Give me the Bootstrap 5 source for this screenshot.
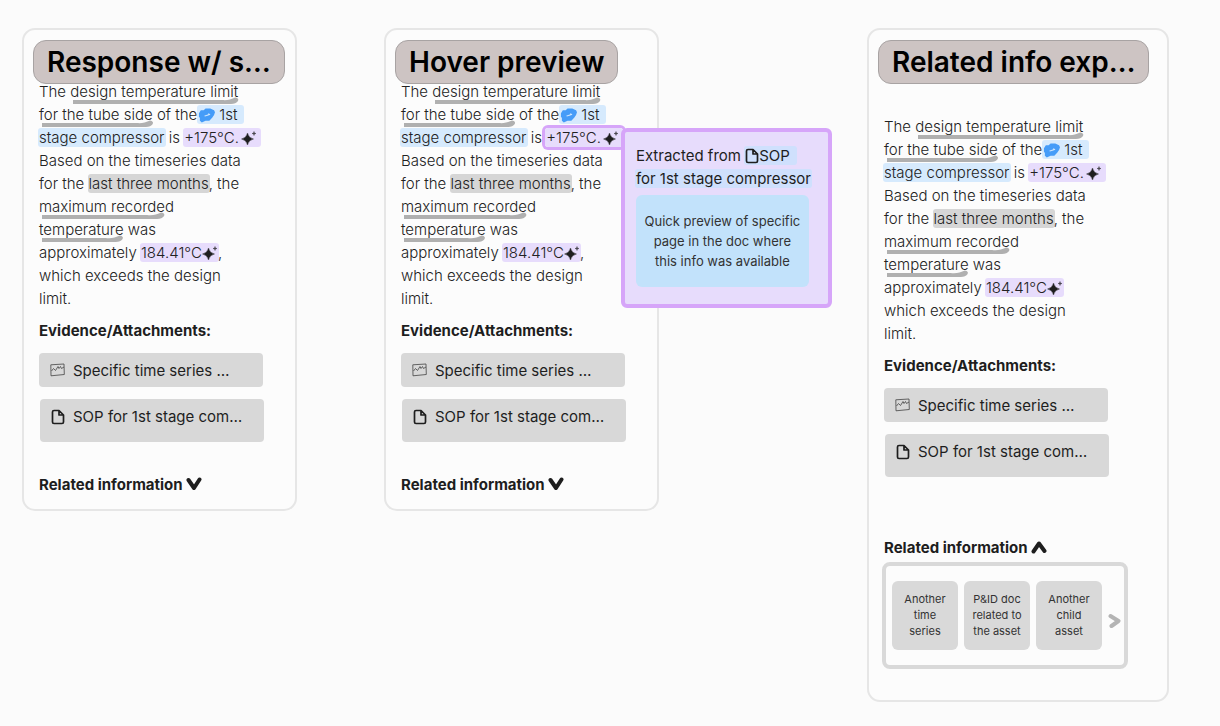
<!DOCTYPE html>
<html lang="en">
<head>
<meta charset="utf-8">
<meta name="viewport" content="width=device-width, initial-scale=1">
<title>Copilot response concepts</title>
<link href="https://cdn.jsdelivr.net/npm/bootstrap@5.3.0/dist/css/bootstrap.min.css" rel="stylesheet">
<style>
  body { background: #fbfbfb; color: #1e1e1e; font-family: Inter, "Liberation Sans", sans-serif; font-size: 15px; line-height: 23px; }
  .board { display: grid; grid-template-columns: minmax(0, 275fr) minmax(0, 87fr) minmax(0, 275fr) minmax(0, 208fr) minmax(0, 302fr); align-items: start; padding: 28px 51px 25px 22px; }
  .board > :nth-child(2) { grid-column: 3; }
  .board > :nth-child(3) { grid-column: 5; }
  .panel { border: 2px solid #e6e6e6; border-radius: 13px; background: #fcfcfc; padding: 10px 15px 13px; }
  .panel-title { display: table; margin: 0 0 0 -6px; padding: 0 13px; border: 1px solid #a8a3a3; border-radius: 13px; background: #cdc4c3; color: #000; font-size: 28px; line-height: 42px; font-weight: 600; white-space: nowrap; }
  .answer { margin: -4px 0 9px; color: #222; font-weight: 300; white-space: nowrap; }
  .panel-open .answer { margin-top: 31px; }
  .section-title { margin: 0; font-size: 15px; line-height: 23px; font-weight: 700; }
  .marked { position: relative; }
  .marked svg { position: absolute; left: 3px; top: 15px; width: 100%; height: 8px; overflow: visible; fill: #b0b0b0; }
  .asset { color: inherit; text-decoration: none; }
  .hl { border-radius: 3px; padding: 0 1px; margin: 0 -1px; }
  .hl-blue { background: #d6eafd; }
  .hl-grey { background: #d6d6d6; }
  .hl-purple { background: #e7dcfc; }
  .hl-wide { padding-right: 4px; }
  .hl-blue.hl-wide { padding-right: 7px; }
  .hl svg { vertical-align: -3px; }
  .hl-wide svg + svg, .hl-purple.hl-wide > svg { margin-left: 2px; }
  .hl-active { position: relative; box-shadow: 0 0 0 3px #d6a5f9; }
  .preview { position: absolute; z-index: 2; left: 100%; top: 0; width: 211px; margin-left: -2px; padding: 12px 8px 17px 11px; border: 4px solid #d6a5f9; border-radius: 6px; background: #e7dcfc; color: #1e1e1e; font-weight: 400; }
  .preview .hl-blue { background: #cfe0fd; }
  .preview-page { width: 173px; margin-top: 5px; padding: 16px 0; border-radius: 6px; background: #c2e2fb; color: #333; font-size: 13px; line-height: 20px; text-align: center; }
  .attachments { padding-top: 11px; }
  .attachment { display: flex; align-items: flex-start; width: 224px; border: 0; border-radius: 4px; background: #d8d8d8; color: #1e1e1e; font-weight: 400; text-align: left; padding: 6px 0 5px 11px; gap: 8px; }
  .attachment svg { flex: none; margin-top: 4px; }
  .attachment-tall { padding-bottom: 14px; margin: 12px 0 31px 1px; }
  .panel-open .attachment-tall { margin-bottom: 59px; }
  .toggle { border: 0; background: none; padding: 0; font-weight: 700; color: inherit; }
  .toggle svg { vertical-align: -1px; }
  .shelf { display: flex; align-items: center; width: 246px; margin: 3px 0 18px -2px; padding: 15px 2px 15px 6px; border: 4px solid #d9d9d9; border-radius: 8px; gap: 6px; }
  .tile { width: 66px; border: 0; border-radius: 6px; background: #d9d9d9; color: #333; font-size: 11px; line-height: 16px; padding: 10px 0 11px; white-space: nowrap; }
  .next { border: 0; background: none; padding: 10px 0 0; line-height: 0; }
  @media (max-width: 1150px) {
    .board { display: flex; flex-wrap: wrap; gap: 40px; }
    .panel { min-width: 275px; }
  }
</style>
</head>
<body>
<svg class="d-none" aria-hidden="true">
  <symbol id="stroke-end" viewBox="0 0 26 8"><path d="M0 3H8C14 4 18 2 21 1Q22 0 24 1Q26 2 25 4Q23 7 18 7H0Z"/></symbol>
  <symbol id="blob" viewBox="0 0 18 15"><path fill="#459cf8" d="M1 5 3 2 6 2 8 0 13 0 17 2 18 4 17 7 15 10 12 13 8 13 4 15 2 13 2 10 1 9Z"/><path fill="none" stroke="#d6eafd" stroke-width="1.300" d="M7 8 9 7.500 12 6.500 11 5.500"/></symbol>
  <symbol id="sparkle" viewBox="0 0 16 16"><path fill="#1e1e1e" d="M6.500 3Q7.500 8 12.500 9Q7.500 10 6.500 15Q5.500 10 .5 9Q5.500 8 6.500 3ZM13 1.500 13.300 3.200 15 3.500 13.300 3.800 13 5.500 12.700 3.800 11 3.500 12.700 3.200Z" stroke="#1e1e1e" stroke-width=".4"/></symbol>
  <symbol id="doc" viewBox="0 0 14 16"><path fill="none" stroke="#1e1e1e" stroke-width="1.700" stroke-linejoin="round" d="M3 1.500H8L12.500 6V13Q12.500 14.500 11 14.500H3Q1.500 14.500 1.500 13V3Q1.500 1.500 3 1.500ZM8 1.500V6H12.500"/></symbol>
  <symbol id="chart" viewBox="0 0 15 14"><path fill="none" stroke="#444" stroke-width=".8" d="M.8 1.800 14 1 14.300 11.500 1 12.800ZM1.500 8 3.500 5.500 5.500 7.500 8 3.500 9 5.500 10.500 3.500 11.500 5.500 14 4"/></symbol>
</svg>

<main class="board">
  <section class="panel">
    <h2 class="panel-title">Response w/ s…</h2>
    <p class="answer">The <span class="marked">design temperature limit<svg><rect y="3" width="90%" height="4"/><svg x="100%" overflow="visible"><use href="#stroke-end" x="-28" width="26" height="8"/></svg></svg></span><br>
      <span class="marked">for the tube side<svg><rect y="3" width="85%" height="4"/><svg x="100%" overflow="visible"><use href="#stroke-end" x="-28" width="26" height="8"/></svg></svg></span> of the<a class="asset" href="#"><span class="hl hl-blue hl-wide ms-0"><svg class="me-1" width="17" height="15"><use href="#blob"/></svg>1st</span><br>
      <span class="hl hl-blue">stage compressor</span></a> is <span class="hl hl-purple hl-wide">+175°C.<svg width="16" height="16"><use href="#sparkle"/></svg></span><br>
      Based on the timeseries data<br>for the <span class="hl hl-grey">last three months</span>, the<br>
      <span class="marked">maximum recorded<svg><rect y="3" width="75%" height="4"/><svg x="100%" overflow="visible"><use href="#stroke-end" x="-38" width="26" height="8"/></svg></svg></span><br>
      <span class="marked">temperature<svg><rect y="3" width="75%" height="4"/><svg x="100%" overflow="visible"><use href="#stroke-end" x="-29" width="26" height="8"/></svg></svg></span> was<br>
      approximately <span class="hl hl-purple">184.41°C<svg width="16" height="16"><use href="#sparkle"/></svg></span>,<br>which exceeds the design<br>limit.</p>
    <h3 class="section-title">Evidence/Attachments:</h3>
    <div class="attachments">
      <button type="button" class="attachment"><svg width="15" height="14"><use href="#chart"/></svg>Specific time series …</button>
      <button type="button" class="attachment attachment-tall"><svg width="14" height="16"><use href="#doc"/></svg>SOP for 1st stage com…</button>
    </div>
    <h3 class="section-title"><button type="button" class="toggle" aria-expanded="false">Related information <svg width="16" height="14" viewBox="0 0 16 14"><path d="M2.500 3 8 11 13.500 2.500" fill="none" stroke="#1e1e1e" stroke-width="4" stroke-linecap="round" stroke-linejoin="round"/></svg></button></h3>
  </section>

  <section class="panel">
    <h2 class="panel-title">Hover preview</h2>
    <div class="answer">The <span class="marked">design temperature limit<svg><rect y="3" width="90%" height="4"/><svg x="100%" overflow="visible"><use href="#stroke-end" x="-28" width="26" height="8"/></svg></svg></span><br>
      <span class="marked">for the tube side<svg><rect y="3" width="85%" height="4"/><svg x="100%" overflow="visible"><use href="#stroke-end" x="-28" width="26" height="8"/></svg></svg></span> of the<a class="asset" href="#"><span class="hl hl-blue hl-wide ms-0"><svg class="me-1" width="17" height="15"><use href="#blob"/></svg>1st</span><br>
      <span class="hl hl-blue">stage compressor</span></a> is <span class="hl hl-purple hl-wide hl-active">+175°C.<svg width="16" height="16"><use href="#sparkle"/></svg><span class="preview" role="tooltip">Extracted from <a class="asset" href="#"><span class="hl hl-blue hl-wide"><svg width="14" height="16"><use href="#doc"/></svg>SOP</span><br><span class="hl hl-blue">for 1st stage compressor</span></a><span class="preview-page d-block">Quick preview of specific<br>page in the doc where<br>this info was available</span></span></span><br>
      Based on the timeseries data<br>for the <span class="hl hl-grey">last three months</span>, the<br>
      <span class="marked">maximum recorded<svg><rect y="3" width="75%" height="4"/><svg x="100%" overflow="visible"><use href="#stroke-end" x="-38" width="26" height="8"/></svg></svg></span><br>
      <span class="marked">temperature<svg><rect y="3" width="75%" height="4"/><svg x="100%" overflow="visible"><use href="#stroke-end" x="-29" width="26" height="8"/></svg></svg></span> was<br>
      approximately <span class="hl hl-purple">184.41°C<svg width="16" height="16"><use href="#sparkle"/></svg></span>,<br>which exceeds the design<br>limit.</div>
    <h3 class="section-title">Evidence/Attachments:</h3>
    <div class="attachments">
      <button type="button" class="attachment"><svg width="15" height="14"><use href="#chart"/></svg>Specific time series …</button>
      <button type="button" class="attachment attachment-tall"><svg width="14" height="16"><use href="#doc"/></svg>SOP for 1st stage com…</button>
    </div>
    <h3 class="section-title"><button type="button" class="toggle" aria-expanded="false">Related information <svg width="16" height="14" viewBox="0 0 16 14"><path d="M2.500 3 8 11 13.500 2.500" fill="none" stroke="#1e1e1e" stroke-width="4" stroke-linecap="round" stroke-linejoin="round"/></svg></button></h3>
  </section>

  <section class="panel panel-open">
    <h2 class="panel-title">Related info exp…</h2>
    <p class="answer">The <span class="marked">design temperature limit<svg><rect y="3" width="90%" height="4"/><svg x="100%" overflow="visible"><use href="#stroke-end" x="-28" width="26" height="8"/></svg></svg></span><br>
      <span class="marked">for the tube side<svg><rect y="3" width="85%" height="4"/><svg x="100%" overflow="visible"><use href="#stroke-end" x="-28" width="26" height="8"/></svg></svg></span> of the<a class="asset" href="#"><span class="hl hl-blue hl-wide ms-0"><svg class="me-1" width="17" height="15"><use href="#blob"/></svg>1st</span><br>
      <span class="hl hl-blue">stage compressor</span></a> is <span class="hl hl-purple hl-wide">+175°C.<svg width="16" height="16"><use href="#sparkle"/></svg></span><br>
      Based on the timeseries data<br>for the <span class="hl hl-grey">last three months</span>, the<br>
      <span class="marked">maximum recorded<svg><rect y="3" width="75%" height="4"/><svg x="100%" overflow="visible"><use href="#stroke-end" x="-38" width="26" height="8"/></svg></svg></span><br>
      <span class="marked">temperature<svg><rect y="3" width="75%" height="4"/><svg x="100%" overflow="visible"><use href="#stroke-end" x="-29" width="26" height="8"/></svg></svg></span> was<br>
      approximately <span class="hl hl-purple">184.41°C<svg width="16" height="16"><use href="#sparkle"/></svg></span><br>which exceeds the design<br>limit.</p>
    <h3 class="section-title">Evidence/Attachments:</h3>
    <div class="attachments">
      <button type="button" class="attachment"><svg width="15" height="14"><use href="#chart"/></svg>Specific time series …</button>
      <button type="button" class="attachment attachment-tall"><svg width="14" height="16"><use href="#doc"/></svg>SOP for 1st stage com…</button>
    </div>
    <h3 class="section-title"><button type="button" class="toggle" aria-expanded="true">Related information <svg width="16" height="14" viewBox="0 0 16 14"><path d="M2.500 11.500 8 3.500 13.500 11" fill="none" stroke="#1e1e1e" stroke-width="4" stroke-linecap="round" stroke-linejoin="round"/></svg></button></h3>
    <div class="shelf">
      <button type="button" class="tile">Another<br>time<br>series</button>
      <button type="button" class="tile">P&amp;ID doc<br>related to<br>the asset</button>
      <button type="button" class="tile">Another<br>child<br>asset</button>
      <button type="button" class="next" aria-label="Next"><svg width="13" height="16" viewBox="0 0 13 16"><path d="M2.500 3 10.500 8 3.500 13" fill="none" stroke="#b4b4b4" stroke-width="4" stroke-linecap="round" stroke-linejoin="round"/></svg></button>
    </div>
  </section>
</main>
<script src="https://cdn.jsdelivr.net/npm/bootstrap@5.3.0/dist/js/bootstrap.bundle.min.js"></script>
</body>
</html>
